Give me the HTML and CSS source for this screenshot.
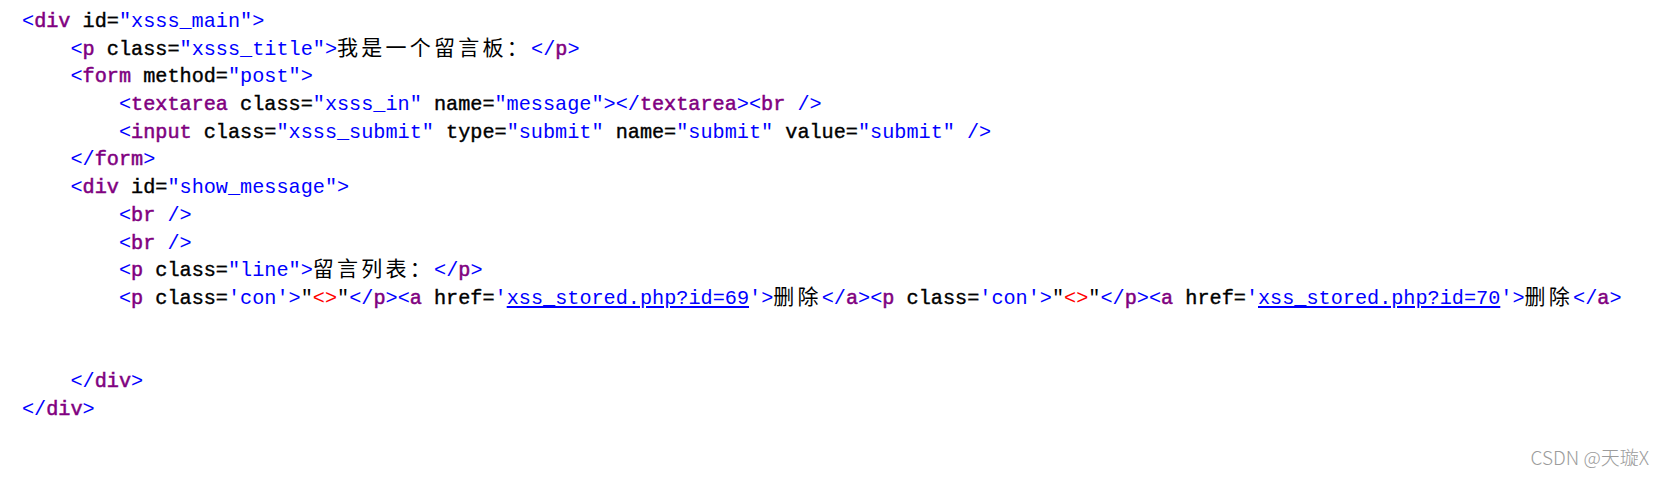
FILE: index.html
```html
<!DOCTYPE html>
<html lang="zh-CN">
<head>
<meta charset="utf-8">
<title>view-source</title>
<link rel="stylesheet" href="styles.css">
</head>
<body>
<div class="page">
  <div class="src">
<div class="ln"><span class="b">&lt;</span><span class="t">div</span><span class="a"> id=</span><span class="v">"xsss_main"</span><span class="b">&gt;</span></div>
<div class="ln">    <span class="b">&lt;</span><span class="t">p</span><span class="a"> class=</span><span class="v">"xsss_title"</span><span class="b">&gt;</span><span class="zh">我是一个留言板：</span><span class="b">&lt;/</span><span class="t">p</span><span class="b">&gt;</span></div>
<div class="ln">    <span class="b">&lt;</span><span class="t">form</span><span class="a"> method=</span><span class="v">"post"</span><span class="b">&gt;</span></div>
<div class="ln">        <span class="b">&lt;</span><span class="t">textarea</span><span class="a"> class=</span><span class="v">"xsss_in"</span><span class="a"> name=</span><span class="v">"message"</span><span class="b">&gt;&lt;/</span><span class="t">textarea</span><span class="b">&gt;&lt;</span><span class="t">br</span><span class="b"> /&gt;</span></div>
<div class="ln">        <span class="b">&lt;</span><span class="t">input</span><span class="a"> class=</span><span class="v">"xsss_submit"</span><span class="a"> type=</span><span class="v">"submit"</span><span class="a"> name=</span><span class="v">"submit"</span><span class="a"> value=</span><span class="v">"submit"</span><span class="b"> /&gt;</span></div>
<div class="ln">    <span class="b">&lt;/</span><span class="t">form</span><span class="b">&gt;</span></div>
<div class="ln">    <span class="b">&lt;</span><span class="t">div</span><span class="a"> id=</span><span class="v">"show_message"</span><span class="b">&gt;</span></div>
<div class="ln">        <span class="b">&lt;</span><span class="t">br</span><span class="b"> /&gt;</span></div>
<div class="ln">        <span class="b">&lt;</span><span class="t">br</span><span class="b"> /&gt;</span></div>
<div class="ln">        <span class="b">&lt;</span><span class="t">p</span><span class="a"> class=</span><span class="v">"line"</span><span class="b">&gt;</span><span class="zh">留言列表：</span><span class="b">&lt;/</span><span class="t">p</span><span class="b">&gt;</span></div>
<div class="ln">        <span class="b">&lt;</span><span class="t">p</span><span class="a"> class=</span><span class="v">'con'</span><span class="b">&gt;</span>"<span class="r">&lt;&gt;</span>"<span class="b">&lt;/</span><span class="t">p</span><span class="b">&gt;&lt;</span><span class="t">a</span><span class="a"> href=</span><span class="v">'<span class="lk">xss_stored.php?id=69</span>'</span><span class="b">&gt;</span><span class="zh">删除</span><span class="b">&lt;/</span><span class="t">a</span><span class="b">&gt;&lt;</span><span class="t">p</span><span class="a"> class=</span><span class="v">'con'</span><span class="b">&gt;</span>"<span class="r">&lt;&gt;</span>"<span class="b">&lt;/</span><span class="t">p</span><span class="b">&gt;&lt;</span><span class="t">a</span><span class="a"> href=</span><span class="v">'<span class="lk">xss_stored.php?id=70</span>'</span><span class="b">&gt;</span><span class="zh">删除</span><span class="b">&lt;/</span><span class="t">a</span><span class="b">&gt;</span></div>
<div class="ln"> </div>
<div class="ln"> </div>
<div class="ln">    <span class="b">&lt;/</span><span class="t">div</span><span class="b">&gt;</span></div>
<div class="ln"><span class="b">&lt;/</span><span class="t">div</span><span class="b">&gt;</span></div>
  </div>
  <div class="mark">CSDN @天璇X</div>
</div>
</body>
</html>
```
FILE: styles.css
```css
html, body {
  margin: 0;
  padding: 0;
  background: #ffffff;
}
.page {
  position: relative;
  width: 1665px;
  height: 478px;
  overflow: hidden;
}
.src {
  padding: 8px 0 0 22px;
  font-family: "Liberation Mono", monospace;
  font-size: 20.2px;
  line-height: 27.7px;
  color: #000000;
}
.ln {
  white-space: pre;
  height: 27.7px;
}
.zh {
  font-family: "Noto Sans CJK SC", sans-serif;
  font-size: 21px;
  letter-spacing: 3.25px;
  line-height: 18px;
  color: #000000;
}
.b { color: #0000ff; }
.t { color: #800080; -webkit-text-stroke: 0.5px #800080; }
.a { color: #000000; -webkit-text-stroke: 0.4px #000000; }
.v { color: #0000ff; }
.r { color: #ff0000; }
.lk { color: #0000ff; text-decoration: underline; }
.mark {
  position: absolute;
  right: 16px;
  bottom: 8px;
  font-family: "Noto Sans CJK SC", "Noto Sans", sans-serif;
  font-size: 19px;
  font-weight: 300;
  color: #9c9c9c;
}
```
